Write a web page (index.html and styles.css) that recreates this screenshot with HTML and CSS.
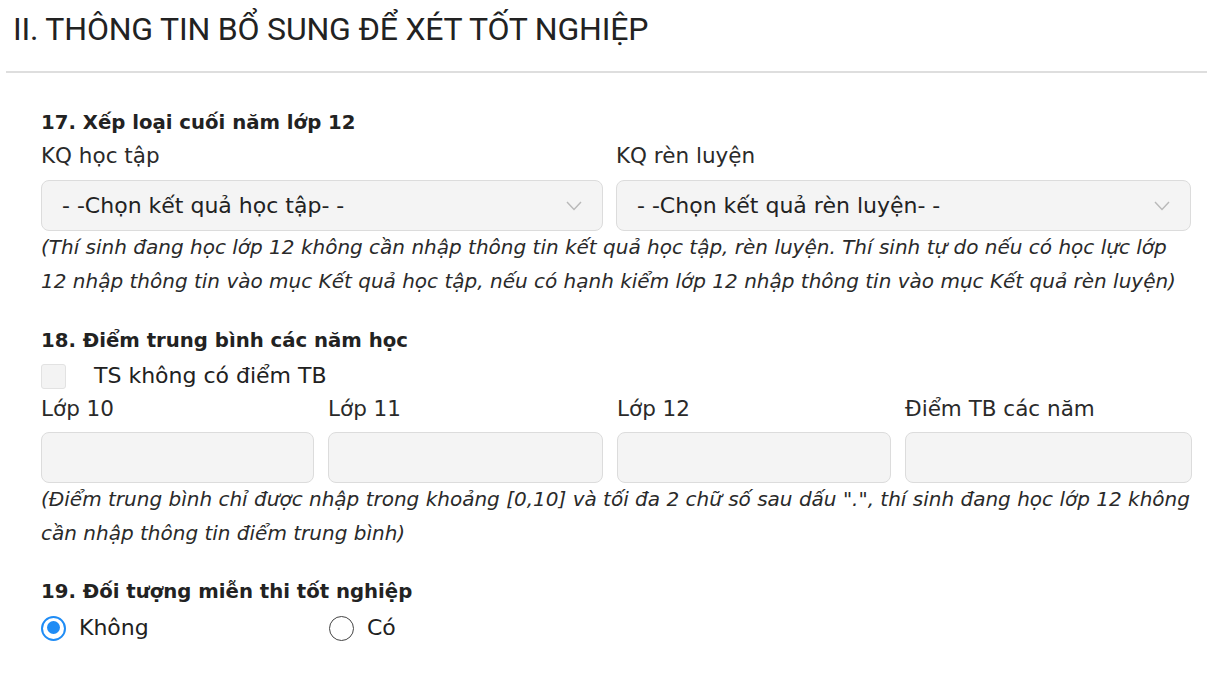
FILE: index.html
```html
<!DOCTYPE html>
<html lang="vi">
<head>
<meta charset="utf-8">
<link rel="stylesheet" href="styles.css">
</head>
<body>
<div class="page">
  <h2 class="title">II. THÔNG TIN BỔ SUNG ĐỂ XÉT TỐT NGHIỆP</h2>
  <hr class="rule">
  <div class="form">
    <section class="group g17">
      <div class="heading">17. Xếp loại cuối năm lớp 12</div>
      <div class="two">
        <div class="field">
          <div class="label">KQ học tập</div>
          <div class="select"><span>- -Chọn kết quả học tập- -</span>
            <svg class="chev" viewBox="0 0 16 10" width="16" height="10"><path d="M1 1 L8 8.5 L15 1" fill="none" stroke="#b9b9b9" stroke-width="1.4"/></svg>
          </div>
        </div>
        <div class="field">
          <div class="label">KQ rèn luyện</div>
          <div class="select"><span>- -Chọn kết quả rèn luyện- -</span>
            <svg class="chev" viewBox="0 0 16 10" width="16" height="10"><path d="M1 1 L8 8.5 L15 1" fill="none" stroke="#b9b9b9" stroke-width="1.4"/></svg>
          </div>
        </div>
      </div>
      <p class="note">(Thí sinh đang học lớp 12 không cần nhập thông tin kết quả học tập, rèn luyện. Thí sinh tự do nếu có học lực lớp 12 nhập thông tin vào mục Kết quả học tập, nếu có hạnh kiểm lớp 12 nhập thông tin vào mục Kết quả rèn luyện)</p>
    </section>

    <section class="group g18">
      <div class="heading">18. Điểm trung bình các năm học</div>
      <label class="check"><span class="box"></span><span>TS không có điểm TB</span></label>
      <div class="four">
        <div class="field"><div class="label">Lớp 10</div><div class="input"></div></div>
        <div class="field"><div class="label">Lớp 11</div><div class="input"></div></div>
        <div class="field"><div class="label">Lớp 12</div><div class="input"></div></div>
        <div class="field"><div class="label">Điểm TB các năm</div><div class="input"></div></div>
      </div>
      <p class="note">(Điểm trung bình chỉ được nhập trong khoảng [0,10] và tối đa 2 chữ số sau dấu ".", thí sinh đang học lớp 12 không cần nhập thông tin điểm trung bình)</p>
    </section>

    <section class="group g19">
      <div class="heading">19. Đối tượng miễn thi tốt nghiệp</div>
      <div class="radios">
        <label class="radio"><span class="dot on"></span><span>Không</span></label>
        <label class="radio"><span class="dot"></span><span>Có</span></label>
      </div>
    </section>
  </div>
</div>
</body>
</html>
```

FILE: styles.css
```css
* { box-sizing: border-box; }
html, body { margin: 0; padding: 0; background: #fff; }
body { color: #212121; font-family: "DejaVu Sans", Inter, sans-serif; }
.page { width: 1207px; height: 684px; overflow: hidden; }
.title {
  margin: 0;
  padding: 10px 0 0 13px;
  font-family: Roboto, "Liberation Sans", sans-serif;
  font-weight: 400;
  font-size: 32px;
  letter-spacing: -0.2px;
  line-height: 38px;
  color: #222;
}
.rule {
  margin: 23px 0 0 6px;
  border: 0;
  height: 2px;
  background: #dedede;
}
.form { padding: 36px 16px 0 41px; }
.heading { font-size: 19.7px; font-weight: 700; line-height: 28px; color: #222; }
.label { font-size: 21.5px; line-height: 28px; color: #2a2a2a; margin-bottom: 9px; }
.two .label { margin-bottom: 10px; }
.two { display: grid; grid-template-columns: 562px 575px; column-gap: 13px; margin-top: 5px; }
.four { display: grid; grid-template-columns: 273px 275px 274px 287px; column-gap: 14px; margin-top: 4px; }
.select, .input {
  height: 51px;
  background: #f4f4f4;
  border: 1.5px solid #dcdcdc;
  border-radius: 8px;
}
.select {
  display: flex;
  align-items: center;
  justify-content: space-between;
  padding: 0 20px 0 20px;
  font-size: 22px;
  color: #222;
}
.chev { display: block; }
.note {
  margin: 0;
  font-style: italic;
  font-size: 20px;
  line-height: 33.5px;
  color: #2a2a2a;
  width: 1152px;
}
.g18 { margin-top: 29px; }
.g19 { margin-top: 28px; }
.check { display: flex; align-items: center; font-size: 22px; line-height: 30px; margin-top: 6px; }
.box { width: 25px; height: 25px; background: #f3f3f3; border: 1.5px solid #e2e2e2; border-radius: 3px; margin-right: 28px; }
.radios { display: flex; margin-top: 7px; }
.radio { display: flex; align-items: center; font-size: 22px; line-height: 30px; width: 288px; }
.dot { width: 25px; height: 25px; border-radius: 50%; border: 1.6px solid #444; margin-right: 13px; position: relative; }
.dot.on { border: 2.5px solid #1f8cf5; }
.dot.on::after { content: ""; position: absolute; left: 3.5px; top: 3.5px; width: 13px; height: 13px; border-radius: 50%; background: #1f8cf5; }
```
